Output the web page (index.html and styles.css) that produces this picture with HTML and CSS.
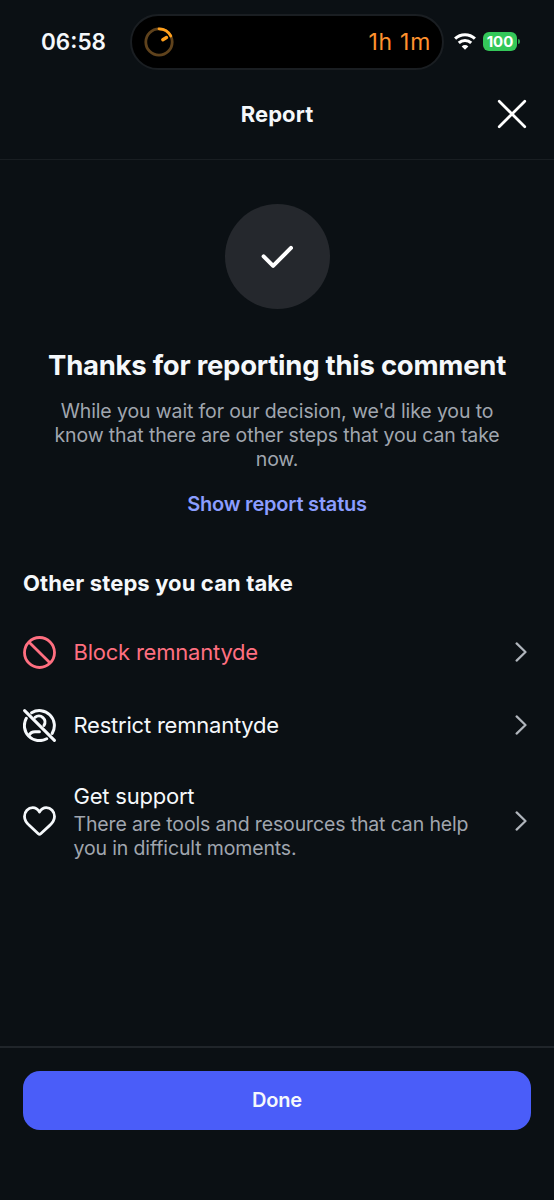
FILE: index.html
```html
<!DOCTYPE html>
<html lang="en">
<head>
<meta charset="utf-8">
<title>Report</title>
<link rel="stylesheet" href="styles.css">
</head>
<body>
<div class="screen">
  <div class="status-bar">
    <span class="clock">06:58</span>
    <div class="island">
      <svg class="timer" width="30" height="30" viewBox="0 0 30 30" fill="none" stroke-width="2.8">
        <circle cx="15" cy="15" r="13.2" stroke="#5f421c"/>
        <path d="M15 1.8A13.2 13.2 0 0 1 26.8 9" stroke="#ff9f1c" stroke-linecap="round"/>
        <path d="M18.8 12.7l3.7-2.2" stroke="#ff9f1c" stroke-width="3.4" stroke-linecap="round"/>
      </svg>
      <span class="remaining">1h 1m</span>
    </div>
    <svg class="wifi" width="22" height="17" viewBox="0 0 22 17" fill="none" stroke="#fff" stroke-width="3">
      <path d="M1.1 5.7a14.2 14.2 0 0 1 19.8 0"/>
      <path d="M4.8 9.9a8.9 8.9 0 0 1 12.4 0"/>
      <path d="M11 16.8l-3.3-3.4a4.7 4.7 0 0 1 6.6 0z" fill="#fff" stroke="none"/>
    </svg>
    <div class="battery"><span class="level">100</span><span class="cap"></span></div>
  </div>

  <header class="header">
    <h1 class="header-title">Report</h1>
    <button class="close" aria-label="Close">
      <svg width="30" height="30" viewBox="0 0 30 30" fill="none" stroke="#fff" stroke-width="2.7" stroke-linecap="round"><path d="M2.2 2.2l25.6 25.6M27.8 2.2L2.2 27.8"/></svg>
    </button>
  </header>

  <main class="content">
    <section class="confirmation">
      <div class="badge">
        <svg width="34" height="26" viewBox="0 0 34 26" fill="none" stroke="#fff" stroke-width="4" stroke-linecap="round" stroke-linejoin="round"><path d="M3.6 12.3l9.5 9.6L31 3.9"/></svg>
      </div>
      <h2 class="thanks">Thanks for reporting this comment</h2>
      <p class="explain">While you wait for our decision, we'd like you to<br>know that there are other steps that you can take<br>now.</p>
      <a class="status-link">Show report status</a>
    </section>

    <section class="steps">
      <h3 class="steps-title">Other steps you can take</h3>
      <div class="row row-danger">
        <svg class="row-icon" width="33" height="33" viewBox="0 0 33 33" fill="none" stroke="currentColor" stroke-width="2.8"><circle cx="16.5" cy="16.5" r="15"/><path d="M5.9 5.9l21.2 21.2"/></svg>
        <span class="row-label">Block remnantyde</span>
        <svg class="chevron" width="12" height="20" viewBox="0 0 12 20"><path d="M1.6 1.4l8.9 8.6-8.9 8.6"/></svg>
      </div>
      <div class="row">
        <svg class="row-icon" width="33" height="33" viewBox="0 0 33 33" fill="none" stroke="currentColor" stroke-width="3" stroke-linecap="round" stroke-linejoin="round">
          <path d="M1.6 1.6l29.8 29.8"/>
          <path d="M8.6 3.8A15 15 0 0 1 29.2 24.4"/>
          <path d="M3.3 9.3A15 15 0 0 0 23.7 29.7"/>
          <path d="M12 8.4A6.1 6.1 0 0 1 21 16.4"/>
          <path d="M5.9 26.5C7.3 23.9 9.4 22.8 12 22.8h4.4"/>
        </svg>
        <span class="row-label">Restrict remnantyde</span>
        <svg class="chevron" width="12" height="20" viewBox="0 0 12 20"><path d="M1.6 1.4l8.9 8.6-8.9 8.6"/></svg>
      </div>
      <div class="row row-support">
        <svg class="row-icon" width="33" height="30" viewBox="0 0 33 30" fill="none" stroke="currentColor" stroke-width="2.8" stroke-linejoin="round"><path d="M23.2 1.7c-3 0-5 1.6-6.7 4.3-1.7-2.7-3.7-4.3-6.7-4.3-4.7 0-8.3 3.8-8.3 8.7 0 4 2 6.4 5 9.2l8.8 8.1q1.2 1.1 2.4 0l8.8-8.1c3-2.8 5-5.2 5-9.2 0-4.9-3.6-8.7-8.3-8.7z"/></svg>
        <div class="row-text">
          <span class="row-label">Get support</span>
          <p class="row-note">There are tools and resources that can help<br>you in difficult moments.</p>
        </div>
        <svg class="chevron" width="12" height="20" viewBox="0 0 12 20"><path d="M1.6 1.4l8.9 8.6-8.9 8.6"/></svg>
      </div>
    </section>
  </main>

  <footer class="footer"><button class="done">Done</button></footer>
</div>
</body>
</html>
```
FILE: styles.css
```css
* { box-sizing: border-box; }
body { margin: 0; background: #0b1014; color: #f5f8fb; font-family: Inter, "Liberation Sans", sans-serif; }
h1, h2, h3, p { margin: 0; }
button { border: 0; padding: 0; font: inherit; color: inherit; background: none; }
svg { display: block; flex: none; }

.screen { display: flex; flex-direction: column; width: 554px; height: 1200px; }

.status-bar { display: flex; align-items: center; height: 83px; padding-left: 41px; }
.clock { width: 89px; font-size: 22.5px; line-height: 26px; font-weight: 600; white-space: nowrap; }
.island { display: flex; align-items: center; justify-content: space-between; width: 314px; height: 56px; padding: 0 11px 0 11.5px; border: 2px solid #1a1e22; border-radius: 28px; background: #000; }
.remaining { color: #ff922e; font-size: 23px; line-height: 26px; letter-spacing: 0.7px; white-space: nowrap; }
.wifi { margin-left: 9.5px; }
.battery { display: flex; align-items: center; margin-left: 7.5px; gap: 1px; }
.level { width: 34px; height: 19px; border-radius: 6px; background: #34c759; color: #fff; font-size: 15px; line-height: 19px; font-weight: 700; text-align: center; }
.cap { width: 2px; height: 5px; border-radius: 0 2px 2px 0; background: #2c9d49; }

.header { display: grid; grid-template-columns: 1fr auto 1fr; align-items: center; height: 77px; padding: 1px 27px 15px; border-bottom: 1px solid #191e22; }
.header-title { grid-column: 2; font-size: 22px; line-height: 28px; font-weight: 700; letter-spacing: 0.1px; }
.close { justify-self: end; }

.content { flex: 1; }
.confirmation { display: flex; flex-direction: column; align-items: center; padding-top: 44px; text-align: center; white-space: nowrap; }
.badge { display: flex; align-items: center; justify-content: center; width: 105px; height: 105px; border-radius: 50%; background: #25282d; }
.thanks { margin-top: 39px; font-size: 27.5px; line-height: 34px; font-weight: 700; letter-spacing: -0.25px; }
.explain { margin-top: 18px; color: #a0a6af; font-size: 19.5px; line-height: 23.75px; letter-spacing: -0.13px; }
.status-link { margin-top: 20.5px; color: #8b9dff; font-size: 20px; line-height: 24px; font-weight: 600; letter-spacing: -0.2px; }

.steps { padding: 53px 27px 0 23px; white-space: nowrap; }
.steps-title { font-size: 22px; line-height: 28px; font-weight: 700; letter-spacing: 0.12px; }
.row { display: flex; align-items: center; height: 73px; }
.steps-title + .row { margin-top: 19px; }
.row-danger { color: #ff6f80; }
.row-icon { margin-right: 17.5px; }
.row-label { font-size: 22px; line-height: 28px; letter-spacing: -0.22px; }
.row-text { display: flex; flex-direction: column; gap: 2px; }
.row-support { height: 118px; }
.row-note { color: #a0a6af; font-size: 19.5px; line-height: 24px; letter-spacing: -0.14px; }
.chevron { margin-left: auto; fill: none; stroke: #b0b5bc; stroke-width: 2.2; stroke-linecap: round; stroke-linejoin: round; }

.footer { height: 154px; padding: 22.5px 23px 0; border-top: 2px solid #20252a; }
.done { display: block; width: 100%; height: 59px; border-radius: 17px; background: #4a5df9; font-size: 20px; font-weight: 600; letter-spacing: -0.2px; }
```
